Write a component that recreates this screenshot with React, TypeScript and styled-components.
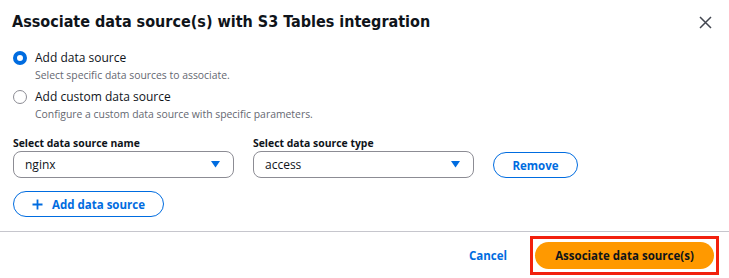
import styled, { createGlobalStyle } from "styled-components";

const GlobalStyle = createGlobalStyle`
  html, body {
    margin: 0;
    padding: 0;
    background: #ffffff;
    font-family: "Open Sans", "Noto Sans", Arial, sans-serif;
    color: #0f141a;
  }
`;

const Modal = styled.div`
  width: 729px;
  height: 278px;
  background: #ffffff;
  display: flex;
  flex-direction: column;
  box-sizing: border-box;
  overflow: hidden;
`;

const Header = styled.header`
  display: flex;
  align-items: center;
  justify-content: space-between;
  padding: 11px 16px 0 12px;
  height: 22px;
`;

const Title = styled.h1`
  margin: 0;
  font-family: "DejaVu Sans Condensed", "Liberation Sans Narrow", sans-serif;
  font-size: 16px;
  font-weight: 700;
  line-height: 22px;
  color: #0f141a;
`;

const CloseButton = styled.button`
  border: 0;
  background: none;
  padding: 0;
  width: 16px;
  height: 16px;
  display: flex;
  align-items: center;
  justify-content: center;
`;

const Body = styled.div`
  padding: 16px 12px 0 13px;
  display: flex;
  flex-direction: column;
`;

const RadioGroup = styled.div`
  display: flex;
  flex-direction: column;
  gap: 5px;
`;

const RadioItem = styled.label`
  display: grid;
  grid-template-columns: 14px 1fr;
  column-gap: 8px;
  align-items: start;
`;

const RadioCircle = styled.span<{ $checked?: boolean }>`
  box-sizing: border-box;
  width: 14px;
  height: 14px;
  margin-top: 2px;
  border-radius: 50%;
  border: ${(p) => (p.$checked ? "4px solid #006ce0" : "1px solid #8c8c94")};
  background: #ffffff;
`;

const RadioText = styled.span`
  display: flex;
  flex-direction: column;
`;

const RadioLabel = styled.span`
  font-size: 12px;
  line-height: 18px;
  color: #0f141a;
`;

const RadioDesc = styled.span`
  font-size: 10.4px;
  line-height: 16px;
  color: #656871;
`;

const FieldRow = styled.div`
  display: flex;
  align-items: flex-end;
  gap: 19px;
  margin-top: 13px;
`;

const Field = styled.div`
  display: flex;
  flex-direction: column;
  width: 221px;
`;

const FieldLabel = styled.span`
  font-size: 10.4px;
  font-weight: 700;
  line-height: 16px;
  color: #0f141a;
`;

const Select = styled.div`
  box-sizing: border-box;
  height: 27px;
  border: 1px solid #8c8c94;
  border-radius: 8px;
  display: flex;
  align-items: center;
  justify-content: space-between;
  padding: 0 13px 0 11px;
  font-size: 12px;
  color: #0f141a;
`;

const PillButton = styled.button<{ $width?: number }>`
  box-sizing: border-box;
  height: 26px;
  width: ${(p) => (p.$width ? `${p.$width}px` : "auto")};
  border: 1px solid #006ce0;
  border-radius: 20px;
  background: #ffffff;
  color: #006ce0;
  font-family: "Open Sans", "Noto Sans", sans-serif;
  font-size: 11.5px;
  font-weight: 700;
  white-space: nowrap;
  display: flex;
  align-items: center;
  justify-content: center;
  gap: 9px;
  padding: 0 12px;
`;

const AddRow = styled.div`
  margin-top: 13px;
  display: flex;
`;

const Divider = styled.hr`
  margin: 14px 0 0;
  border: 0;
  border-top: 1px solid #c6c6cd;
`;

const Footer = styled.footer`
  display: flex;
  justify-content: flex-end;
  align-items: center;
  gap: 23px;
  padding: 4px 10px 0 0;
`;

const LinkButton = styled.button`
  border: 0;
  background: none;
  color: #006ce0;
  font-family: "Open Sans", "Noto Sans", sans-serif;
  font-size: 11.5px;
  font-weight: 700;
  padding: 0;
`;

const Highlight = styled.div`
  border: 3px solid #f2200d;
  padding: 3px 2px;
`;

const PrimaryButton = styled.button`
  box-sizing: border-box;
  display: block;
  width: 179px;
  height: 27px;
  border: 0;
  border-radius: 20px;
  background: #ff9900;
  color: #0f141a;
  font-family: "Open Sans", "Noto Sans", sans-serif;
  font-size: 11.5px;
  font-weight: 700;
`;

const Caret = () => (
  <svg width="9" height="7" viewBox="0 0 9 7">
    <path d="M0 0 H9 L4.5 6.5 Z" fill="#006ce0" />
  </svg>
);

const CloseIcon = () => (
  <svg width="13" height="13" viewBox="0 0 13 13">
    <path d="M1 1 L12 12 M12 1 L1 12" stroke="#424650" strokeWidth="1.5" fill="none" />
  </svg>
);

const PlusIcon = () => (
  <svg width="11" height="11" viewBox="0 0 11 11">
    <path d="M5.5 0.5 V10.5 M0.5 5.5 H10.5" stroke="#006ce0" strokeWidth="1.8" fill="none" />
  </svg>
);

const options = [
  { label: "Add data source", desc: "Select specific data sources to associate.", checked: true },
  { label: "Add custom data source", desc: "Configure a custom data source with specific parameters.", checked: false },
];

function App() {
  return (
    <>
      <GlobalStyle />
      <Modal>
        <Header>
          <Title>Associate data source(s) with S3 Tables integration</Title>
          <CloseButton aria-label="Close">
            <CloseIcon />
          </CloseButton>
        </Header>
        <Body>
          <RadioGroup>
            {options.map((o) => (
              <RadioItem key={o.label}>
                <RadioCircle $checked={o.checked} />
                <RadioText>
                  <RadioLabel>{o.label}</RadioLabel>
                  <RadioDesc>{o.desc}</RadioDesc>
                </RadioText>
              </RadioItem>
            ))}
          </RadioGroup>
          <FieldRow>
            <Field>
              <FieldLabel>Select data source name</FieldLabel>
              <Select>
                nginx
                <Caret />
              </Select>
            </Field>
            <Field>
              <FieldLabel>Select data source type</FieldLabel>
              <Select>
                access
                <Caret />
              </Select>
            </Field>
            <PillButton $width={85}>Remove</PillButton>
          </FieldRow>
          <AddRow>
            <PillButton $width={151}>
              <PlusIcon />
              Add data source
            </PillButton>
          </AddRow>
        </Body>
        <Divider />
        <Footer>
          <LinkButton>Cancel</LinkButton>
          <Highlight>
            <PrimaryButton>Associate data source(s)</PrimaryButton>
          </Highlight>
        </Footer>
      </Modal>
    </>
  );
}

export default App;
